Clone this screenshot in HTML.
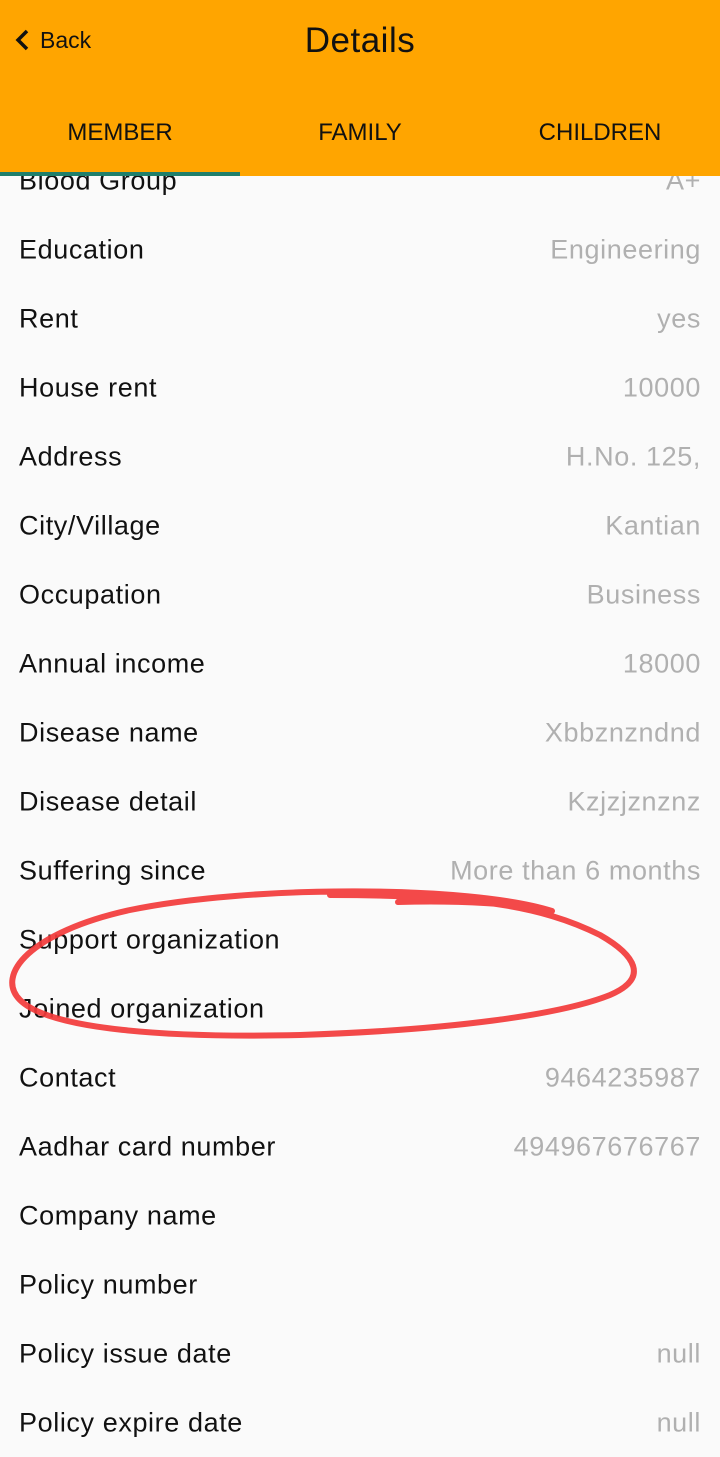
<!DOCTYPE html>
<html><head><meta charset="utf-8"><style>
*{margin:0;padding:0;box-sizing:border-box}
body{width:720px;height:1457px;background:#fafafa;font-family:"Liberation Sans",sans-serif;position:relative;overflow:hidden}
.hdr{position:absolute;left:0;top:0;width:720px;height:176px;background:#ffa500;z-index:2}
.back{position:absolute;left:14px;top:27px;font-size:23px;color:#111}
.title{position:absolute;left:0;width:720px;text-align:center;top:21px;font-size:35px;color:#111;letter-spacing:0.5px}
.tab{position:absolute;top:119px;font-size:24px;color:#111;width:240px;text-align:center}
.ul{position:absolute;left:0;top:172px;width:240px;height:4px;background:#1f7f6b}
.row{position:absolute;left:0;width:720px;height:69px}
.row .l{position:absolute;left:19px;top:50%;transform:translateY(-50%);font-size:27px;letter-spacing:0.6px;color:#111}
.row .v{position:absolute;right:19px;top:50%;transform:translateY(-50%);font-size:27px;letter-spacing:0.6px;color:#b0b0b0}
svg{position:absolute;left:0;top:0;z-index:3}
</style></head><body>
<div class="hdr">
<div class="back"><svg width="18" height="26" style="position:static;vertical-align:-5px;margin-right:8px" viewBox="0 0 18 26"><path d="M13 4 L4 13 L13 22" stroke="#111" stroke-width="3.5" fill="none"/></svg>Back</div>
<div class="title">Details</div>
<div class="tab" style="left:0">MEMBER</div>
<div class="tab" style="left:240px">FAMILY</div>
<div class="tab" style="left:480px">CHILDREN</div>
<div class="ul"></div>
</div>
<div class="row" style="top:146px"><span class="l">Blood Group</span><span class="v">A+</span></div>
<div class="row" style="top:215px"><span class="l">Education</span><span class="v">Engineering</span></div>
<div class="row" style="top:284px"><span class="l">Rent</span><span class="v">yes</span></div>
<div class="row" style="top:353px"><span class="l">House rent</span><span class="v">10000</span></div>
<div class="row" style="top:422px"><span class="l">Address</span><span class="v">H.No. 125,</span></div>
<div class="row" style="top:491px"><span class="l">City/Village</span><span class="v">Kantian</span></div>
<div class="row" style="top:560px"><span class="l">Occupation</span><span class="v">Business</span></div>
<div class="row" style="top:629px"><span class="l">Annual income</span><span class="v">18000</span></div>
<div class="row" style="top:698px"><span class="l">Disease name</span><span class="v">Xbbznzndnd</span></div>
<div class="row" style="top:767px"><span class="l">Disease detail</span><span class="v">Kzjzjznznz</span></div>
<div class="row" style="top:836px"><span class="l">Suffering since</span><span class="v">More than 6 months</span></div>
<div class="row" style="top:905px"><span class="l">Support organization</span></div>
<div class="row" style="top:974px"><span class="l">Joined organization</span></div>
<div class="row" style="top:1043px"><span class="l">Contact</span><span class="v">9464235987</span></div>
<div class="row" style="top:1112px"><span class="l">Aadhar card number</span><span class="v">494967676767</span></div>
<div class="row" style="top:1181px"><span class="l">Company name</span></div>
<div class="row" style="top:1250px"><span class="l">Policy number</span></div>
<div class="row" style="top:1319px"><span class="l">Policy issue date</span><span class="v">null</span></div>
<div class="row" style="top:1388px"><span class="l">Policy expire date</span><span class="v">null</span></div>
<svg width="720" height="1457"><path d="M398,902 C460,900 520,904 552,911 M552,911 C470,885 250,885 130,910 C30,932 -5,975 20,1000 C50,1030 170,1038 300,1035 C450,1030 560,1015 610,995 C650,978 635,955 600,935 C540,905 470,895 330,895" stroke="#f23a3a" stroke-width="6" fill="none" stroke-linecap="round" opacity="0.92"/></svg>
</body></html>
